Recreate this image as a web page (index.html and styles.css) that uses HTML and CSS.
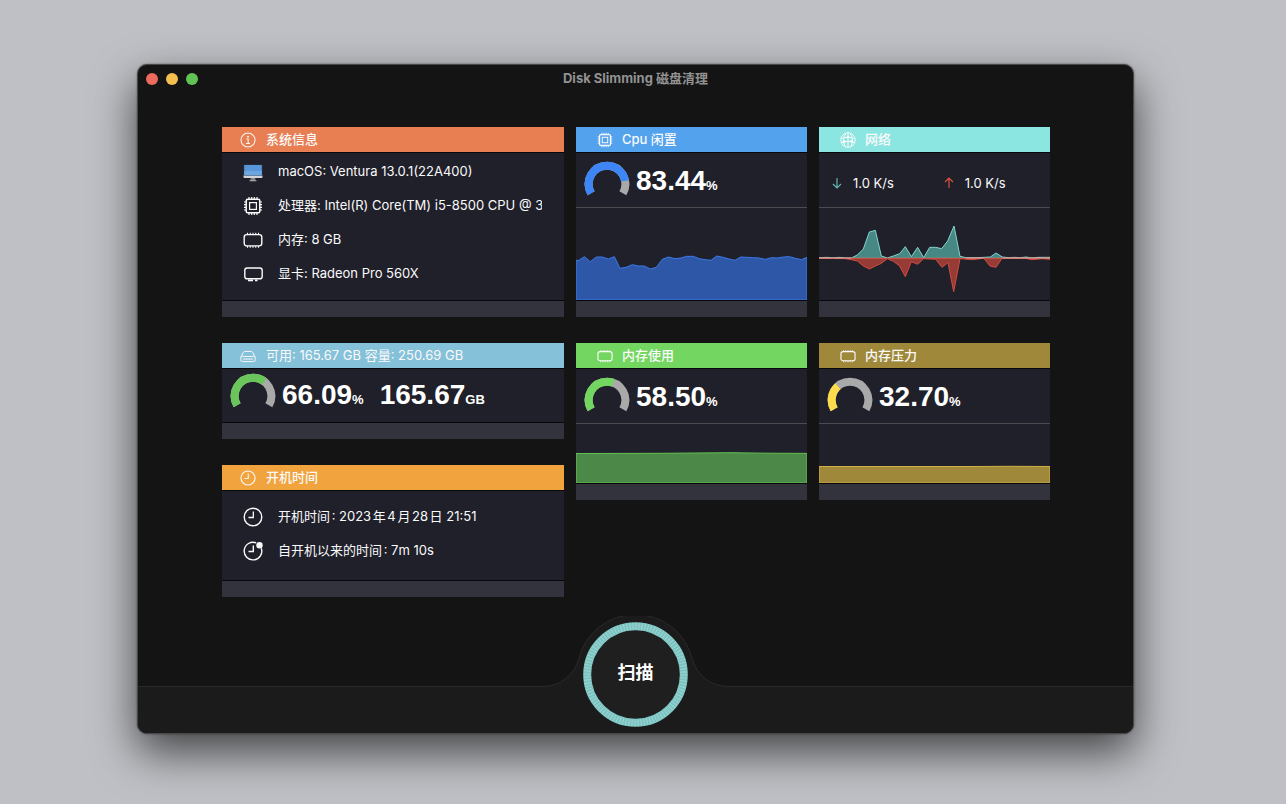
FILE: index.html
```html
<!DOCTYPE html>
<html lang="zh-CN">
<head>
<meta charset="utf-8">
<title>Disk Slimming 磁盘清理</title>
<link rel="stylesheet" href="styles.css">
</head>
<body>
<svg class="sprite" aria-hidden="true">
  <symbol id="cpu" viewBox="0 0 20 20"><g fill="none" stroke="currentColor"><rect x="3.2" y="3.2" width="13.6" height="13.6" rx="1.6" stroke-width="1.5"/><rect x="6.6" y="6.6" width="6.8" height="6.8" stroke-width="1.2"/><path stroke-width="1.2" d="M6 1v2M8.7 1v2M11.3 1v2M14 1v2M6 17v2M8.7 17v2M11.3 17v2M14 17v2M1 6h2M1 8.7h2M1 11.3h2M1 14h2M17 6h2M17 8.7h2M17 11.3h2M17 14h2"/></g></symbol>
  <symbol id="memory" viewBox="0 0 20 20"><g fill="none" stroke="currentColor"><rect x="1.200" y="4.600" width="17.600" height="11.300" rx="2.600" stroke-width="1.400"/><path stroke-width="1.100" d="M4.500 2.800v1.800M7.250 2.800v1.800M10 2.800v1.800M12.750 2.800v1.800M15.500 2.800v1.800M4.500 15.900v1.800M7.250 15.900v1.800M10 15.900v1.800M12.750 15.900v1.800M15.500 15.900v1.800"/></g></symbol>
  <symbol id="clock" viewBox="0 0 20 20"><g fill="none" stroke="currentColor" stroke-width="1.400"><circle cx="10" cy="10" r="8.800"/><path d="M10.300 4.500v6H5.500" stroke-width="1.300"/></g></symbol>
</svg>
<main class="window">
  <header class="titlebar">
    <div class="lights">
      <button class="light red" aria-label="关闭"></button>
      <button class="light yellow" aria-label="最小化"></button>
      <button class="light green" aria-label="缩放"></button>
    </div>
    <h1 class="title">Disk Slimming 磁盘清理</h1>
  </header>

  <div class="dashboard">
    <div class="column wide">
      <section class="card">
        <h2 class="card-head orange"><svg class="icon" viewBox="0 0 20 20"><circle cx="10" cy="10" r="8.800" fill="none" stroke="currentColor" stroke-width="1.300"/><circle cx="10" cy="5.800" r="1.100" fill="currentColor"/><path d="M8 8.700h2.200v5.800M7.500 14.500h5" fill="none" stroke="currentColor" stroke-width="1.300"/></svg><span class="head-text">系统信息</span></h2>
        <ul class="rows system">
          <li class="row"><svg class="row-icon" viewBox="0 0 20 20"><path d="M8 15h4l.6 3.600H7.400z" fill="#85868a"/><path d="M6.600 18.300h6.800v.9H6.600z" fill="#b5b6b8"/><path d="M.5 13.200h19V15a1 1 0 0 1-1 1h-17a1 1 0 0 1-1-1z" fill="#d3d4d5"/><path d="M.5 2.500h19v10.900H.5z" fill="#263346"/><path d="M1.200 3.100h17.600v10.100H1.200z" fill="#5797d9"/><path d="M1.200 9.500c4-2 8 1 17.600-1v4.700H1.200z" fill="#6ba6df"/></svg><span class="row-text">macOS: Ventura 13.0.1(22A400)</span></li>
          <li class="row"><svg class="row-icon"><use href="#cpu"/></svg><span class="row-text">处理器: Intel(R) Core(TM) i5-8500 CPU @ 3</span></li>
          <li class="row"><svg class="row-icon"><use href="#memory"/></svg><span class="row-text">内存: 8 GB</span></li>
          <li class="row"><svg class="row-icon" viewBox="0 0 20 20"><rect x="1.800" y="4" width="17.400" height="10.800" rx="2.400" fill="none" stroke="currentColor" stroke-width="1.400"/><path d="M5 15.400h5v1.800H5zM12 15.400h2.500v1.800H12z" fill="currentColor"/></svg><span class="row-text">显卡: Radeon Pro 560X</span></li>
        </ul>
        <div class="card-foot"></div>
      </section>

      <section class="card">
        <h2 class="card-head sky"><svg class="icon" viewBox="0 0 20 20"><g fill="none" stroke="currentColor" stroke-width="1.200"><path d="M1 11.500 4.300 5.300Q4.900 4.300 6 4.300h8q1.100 0 1.700 1L19 11.500"/><rect x="1" y="10.500" width="18" height="6.500" rx="2.200"/><path d="M4 13.800h12"/></g></svg><span class="head-text">可用: 165.67 GB 容量: 250.69 GB</span></h2>
        <div class="meter disk">
          <svg class="gauge lime" viewBox="0 0 46 46"><path class="track" d="M7.150 32.150a18.300 18.300 0 1 1 31.700 0"/><path class="value" pathLength="100" stroke-dasharray="66.09 200" d="M7.150 32.150a18.300 18.300 0 1 1 31.700 0"/></svg>
          <p class="figure">66.09<small>%</small></p>
          <p class="figure">165.67<small>GB</small></p>
        </div>
        <div class="card-foot"></div>
      </section>

      <section class="card">
        <h2 class="card-head amber"><svg class="icon"><use href="#clock"/></svg><span class="head-text">开机时间</span></h2>
        <ul class="rows uptime">
          <li class="row"><svg class="row-icon"><use href="#clock"/></svg><span class="row-text">开机时间: 2023年4月28日 21:51</span></li>
          <li class="row"><svg class="row-icon" viewBox="0 0 20 20"><path d="M13.200 1.900A8.800 8.800 0 1 0 18.300 7.200M10.300 4.500v6H5.500" fill="none" stroke="currentColor" stroke-width="1.400"/><circle cx="16.500" cy="4.300" r="3.200" fill="currentColor"/></svg><span class="row-text">自开机以来的时间: 7m 10s</span></li>
        </ul>
        <div class="card-foot"></div>
      </section>
    </div>

    <div class="column">
      <section class="card">
        <h2 class="card-head blue"><svg class="icon"><use href="#cpu"/></svg><span class="head-text">Cpu 闲置</span></h2>
        <div class="meter ruled">
          <svg class="gauge azure" viewBox="0 0 46 46"><path class="track" d="M7.150 32.150a18.300 18.300 0 1 1 31.700 0"/><path class="value" pathLength="100" stroke-dasharray="83.44 200" d="M7.150 32.150a18.300 18.300 0 1 1 31.700 0"/></svg>
          <p class="figure">83.44<small>%</small></p>
        </div>
        <svg class="chart tall" viewBox="18 264 693 276" preserveAspectRatio="none"><path fill="#2f57a8" stroke="#3b7ae8" d="M18 421 27 421 43 410 61 425 79 411 97 411 115 417 133 410 150 445 168 442 187 434 205 438 223 438 241 447 259 442 277 418 295 411 315 416 333 414 350 409 370 409 387 416 405 419 423 421 440 408 459 412 477 417 495 421 512 411 548 413 567 414 586 418 604 413 622 414 640 411 658 410 676 415 694 419 711 412V540H18z"/></svg>
        <div class="card-foot"></div>
      </section>

      <section class="card">
        <h2 class="card-head lime-head"><svg class="icon"><use href="#memory"/></svg><span class="head-text">内存使用</span></h2>
        <div class="meter ruled">
          <svg class="gauge green-value" viewBox="0 0 46 46"><path class="track" d="M7.150 32.150a18.300 18.300 0 1 1 31.700 0"/><path class="value" pathLength="100" stroke-dasharray="58.5 200" d="M7.150 32.150a18.300 18.300 0 1 1 31.700 0"/></svg>
          <p class="figure">58.50<small>%</small></p>
        </div>
        <svg class="chart short" viewBox="0 0 231 59" preserveAspectRatio="none"><path fill="#4c8847" stroke="#62c153" d="M0 29.500 85 29.300 155 28.700 190 29.200 231 29.400V59H0z"/></svg>
        <div class="card-foot"></div>
      </section>
    </div>

    <div class="column">
      <section class="card">
        <h2 class="card-head mint"><svg class="icon" viewBox="0 0 20 20"><g fill="none" stroke="currentColor" stroke-width="1.200"><circle cx="10" cy="10" r="9"/><path d="M10 1v18M1.500 8.500Q10 4.500 18.500 8.500M1.500 13Q10 10 18.500 13M7.500 1.500Q2 9 6.500 18.300M12.500 1.500Q18 9 13.500 18.300"/></g><circle cx="10" cy="6.500" r="1.700" fill="currentColor"/><circle cx="5" cy="12" r="1.700" fill="currentColor"/><circle cx="14.700" cy="11.500" r="1.700" fill="currentColor"/></svg><span class="head-text">网络</span></h2>
        <div class="rates ruled">
          <p class="rate"><svg class="arrow down" viewBox="0 0 12 12"><path d="M6 1v10M2 7l4 4 4-4"/></svg>1.0 K/s</p>
          <p class="rate"><svg class="arrow up" viewBox="0 0 12 12"><path d="M6 11V1M2 5l4-4 4 4"/></svg>1.0 K/s</p>
        </div>
        <svg class="chart tall" viewBox="21 264 693 276" preserveAspectRatio="none"><path fill="#478784" stroke="#84d4cd" d="M21 415V413L45 412 63 414 82 412 100 414 118 414 136 405 154 387 172 336 190 331 208 408 226 414 244 408 263 401 280 380 298 410 317 382 335 413 353 382 371 382 389 386 407 363 426 318 444 409 462 413 498 413 535 411 552 399 571 411 590 413 608 412 626 413 642 411 660 414 678 412 714 412V415z"/><path fill="#973b36" stroke="#d24b3e" d="M21 415 100 416 118 419 136 423 154 438 172 447 190 438 208 430 226 416 244 424 262 437 280 470 298 425 317 433 335 416 371 418 390 442 408 428 425 515 444 416 480 419 515 415 534 438 552 442 570 415 640 415 660 419 690 416 714 418V415z"/><path fill="none" stroke="#dda39c" d="M21 414H118M462 414H515M571 414H714"/></svg>
        <div class="card-foot"></div>
      </section>

      <section class="card">
        <h2 class="card-head gold"><svg class="icon"><use href="#memory"/></svg><span class="head-text">内存压力</span></h2>
        <div class="meter ruled">
          <svg class="gauge yellow-value" viewBox="0 0 46 46"><path class="track" d="M7.150 32.150a18.300 18.300 0 1 1 31.700 0"/><path class="value" pathLength="100" stroke-dasharray="32.7 200" d="M7.150 32.150a18.300 18.300 0 1 1 31.700 0"/></svg>
          <p class="figure">32.70<small>%</small></p>
        </div>
        <svg class="chart short" viewBox="0 0 231 59" preserveAspectRatio="none"><path fill="#9f883a" stroke="#d0b044" d="M0 42.500H155L190 42.300 231 42.500V59H0z"/></svg>
        <div class="card-foot"></div>
      </section>
    </div>
  </div>

  <footer class="dock">
    <div class="shelf"></div>
    <div class="hub">
      <svg class="hump" viewBox="0 0 193 117"><path class="hump-fill" d="M0 70.500H4A37 37 0 0 0 39.600 43.400 58.500 58.500 0 0 1 153.400 43.400 37 37 0 0 0 189 70.500H193V117H0z"/><path class="hump-line" d="M0 70.500H4A37 37 0 0 0 39.600 43.400 58.500 58.500 0 0 1 153.400 43.400 37 37 0 0 0 189 70.500H193"/></svg>
      <button class="scan">
        <svg class="ring" viewBox="0 0 105 105"><circle cx="52.500" cy="52.500" r="48.300" fill="#1f1f1f" stroke="#79c5c3" stroke-width="8"/><circle cx="52.500" cy="52.500" r="48.300" fill="none" stroke="#a0d2cf" stroke-width="7" pathLength="300" stroke-dasharray="1 2"/></svg>
        <span class="scan-label">扫描</span>
      </button>
    </div>
    <div class="shelf"></div>
  </footer>
</main>
</body>
</html>
```
FILE: styles.css
```css
* { box-sizing: border-box; }

body {
  margin: 0;
  min-height: 100vh;
  padding: 64px 152px 70px 137px;
  display: flex;
  background: #bfc0c5;
  color: #fafafb;
  font: 13px/20px Inter, "Noto Sans CJK SC", sans-serif;
}

h1, h2, p, ul { margin: 0; padding: 0; font-size: 13px; }
ul { list-style: none; }
button { border: 0; padding: 0; font-family: inherit; }
.sprite { position: absolute; width: 0; height: 0; }

.window {
  flex: 1;
  min-width: 0;
  display: flex;
  flex-direction: column;
  overflow: hidden;
  border: 1px solid #48484a;
  border-radius: 10px;
  background: #141414;
  box-shadow: 0 0 2px rgba(0, 0, 0, .5), 0 18px 44px rgba(0, 0, 0, .65);
}

.titlebar {
  display: grid;
  grid-template-columns: 1fr auto 1fr;
  align-items: center;
  height: 27px;
  padding: 0 8px;
}
.lights { display: flex; gap: 8px; }
.light { width: 12px; height: 12px; border-radius: 50%; }
.red { background: #ec6a5e; }
.yellow { background: #f4bf4f; }
.green { background: #61c354; }
.title { padding-bottom: 2px; color: #929292; font-weight: 700; }

.dashboard {
  display: grid;
  grid-template-columns: 342fr 231fr 231fr;
  align-items: start;
  gap: 12px;
  padding: 35px 83px 0 84px;
}
.column { display: flex; flex-direction: column; gap: 26px; min-width: 0; }
.card { background: #20202a; }
.card-head {
  display: flex;
  align-items: center;
  gap: 9px;
  height: 26px;
  padding: 0 21px;
  border-bottom: 1px solid #08080a;
  color: #fafafa;
  font-weight: 500;
}
.wide .card-head { gap: 10px; padding: 0 18px; }
.head-text, .row-text { padding-bottom: 2px; }
.icon { width: 16px; height: 16px; flex: none; }
.orange { background: #e77f53; }
.sky { background: #85c1d9; font-weight: 400; }
.amber { background: #f1a33d; }
.blue { background: #53a2ee; }
.lime-head { background: #73d661; }
.mint { background: #8be5e0; }
.gold { background: #9f883a; }
.card-foot { height: 17px; border-top: 1px solid #08080a; background: #33333d; }

.system { padding: 2px 22px 9px 21px; }
.uptime { padding: 9px 22px 12px 21px; text-autospace: normal; }
.row { display: flex; align-items: center; gap: 15px; height: 34px; }
.row-icon { width: 20px; height: 20px; flex: none; }
.row-text { flex: 1; overflow: hidden; white-space: nowrap; }

.ruled { border-bottom: 1px solid #4b4b50; }
.meter { display: flex; align-items: center; gap: 6px; height: 55px; padding: 7px 0 0 8px; }
.disk { height: 53px; padding-top: 4px; }
.gauge { width: 46px; height: 46px; flex: none; align-self: flex-end; }
.disk .gauge { align-self: flex-start; }
.gauge path { fill: none; stroke-width: 8; }
.track { stroke: #a9a9aa; }
.lime .value { stroke: #6ac65a; }
.azure .value { stroke: #3e85f7; }
.green-value .value { stroke: #73d661; }
.yellow-value .value { stroke: #fddb4b; }
.figure {
  color: #fff;
  font: bold 28px/32px "Liberation Sans", Arial, sans-serif;
}
.figure small { font-size: 13px; }
.figure + .figure { margin-left: 10px; }
.chart { display: block; width: 100%; }
.chart path { vector-effect: non-scaling-stroke; stroke-width: 1; }
.tall { height: 92px; }
.short { height: 59px; }

.rates { display: flex; align-items: center; height: 55px; padding: 6px 0 0 12px; }
.rate { display: flex; align-items: center; gap: 10px; flex: 0 0 51%; }
.arrow { width: 12px; height: 12px; fill: none; stroke-width: 1.2; }
.down { stroke: #63b5b0; }
.up { stroke: #d8503f; }

.dock { display: flex; align-items: flex-end; margin-top: auto; }
.shelf { flex: 1; height: 47px; border-top: 1px solid #2a2a2a; background: #1b1b1b; }
.hub { display: grid; place-items: center; width: 193px; }
.hump, .scan { grid-area: 1 / 1; }
.hump { width: 193px; height: 117px; }
.hump-fill { fill: #1b1b1b; }
.hump-line { fill: none; stroke: #2a2a2a; }
.scan { display: grid; place-items: center; width: 105px; height: 105px; border-radius: 50%; background: none; }
.ring, .scan-label { grid-area: 1 / 1; }
.ring { width: 105px; height: 105px; }
.scan-label { color: #fff; font-size: 18px; line-height: 24px; font-weight: 700; padding-bottom: 4px; }
```
